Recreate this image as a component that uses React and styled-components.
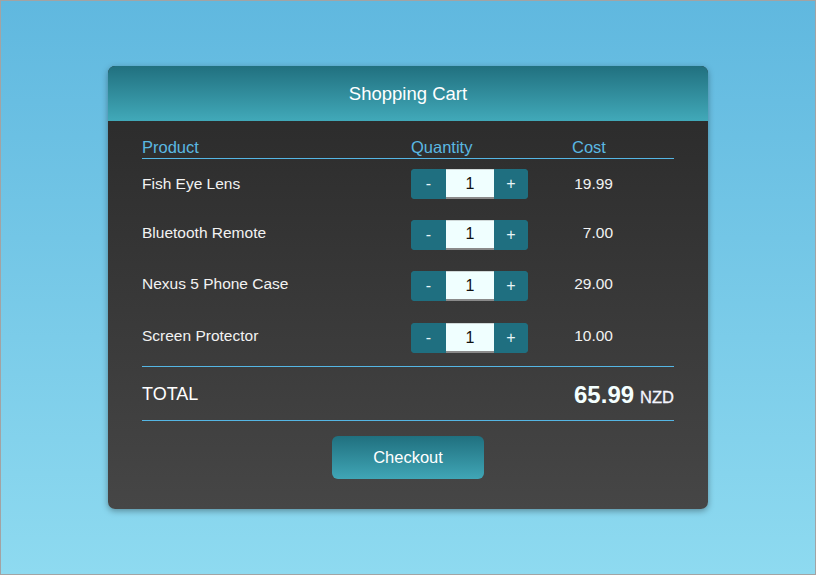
import styled, { createGlobalStyle } from "styled-components";

const GlobalStyle = createGlobalStyle`
  html, body {
    margin: 0;
    padding: 0;
  }
  body {
    font-family: "Liberation Sans", Arial, Helvetica, sans-serif;
  }
`;

const Page = styled.div`
  box-sizing: border-box;
  width: 816px;
  height: 575px;
  border: 1px solid #a3a3a3;
  background: linear-gradient(to bottom, #60b8df, #8edaf0);
  display: flex;
  align-items: center;
  justify-content: center;
`;

const Card = styled.div`
  width: 600px;
  height: 443px;
  border-radius: 7px;
  overflow: hidden;
  display: flex;
  flex-direction: column;
  background: linear-gradient(to bottom, #292929, #464646);
  box-shadow: 0 2px 6px rgba(0, 0, 0, 0.35);
`;

const Header = styled.div`
  height: 55px;
  flex-shrink: 0;
  display: flex;
  align-items: center;
  justify-content: center;
  color: #fff;
  font-size: 18.5px;
  background: linear-gradient(to bottom, #21707f, #41a9b9);
`;

const Body = styled.div`
  padding: 14px 34px 30px;
  display: flex;
  flex-direction: column;
`;

const Row = styled.div`
  display: grid;
  grid-template-columns: 269px 161px 1fr;
  align-items: center;
  height: ${({ h }) => h}px;
  border-bottom: ${({ line }) => (line ? "1px solid #55b6e4" : "none")};
`;

const HeadCell = styled.div`
  color: #5ab8e2;
  font-size: 16.5px;
  line-height: 20px;
`;

const Name = styled.div`
  color: #f2f2f2;
  font-size: 15.5px;
  padding-bottom: ${({ lift }) => lift}px;
`;

const Cost = styled.div`
  color: #f2f2f2;
  font-size: 15.5px;
  width: 41px;
  text-align: right;
  padding-bottom: ${({ lift }) => lift}px;
`;

const Spinner = styled.div`
  display: flex;
  width: 117px;
  height: 30px;
  border-radius: 4px;
  overflow: hidden;
  background: #1f6f80;
`;

const SpinButton = styled.button`
  width: ${({ w }) => w}px;
  border: none;
  padding: 0;
  background: #1f6f80;
  color: #e8f6f8;
  font-family: inherit;
  font-size: 16px;
  cursor: pointer;
`;

const QtyInput = styled.input`
  box-sizing: border-box;
  width: 48px;
  border: none;
  border-bottom: 2px solid #8a8a8a;
  border-top: 1px solid #cfd8d8;
  background: #f0ffff;
  color: #111;
  text-align: center;
  font-family: inherit;
  font-size: 16px;
  outline: none;
  padding: 0;
`;

const TotalRow = styled.div`
  margin-top: 2px;
  height: 53px;
  display: flex;
  align-items: center;
  justify-content: space-between;
  border-top: 1px solid #55b6e4;
  border-bottom: 1px solid #55b6e4;
  color: #fff;
`;

const TotalLabel = styled.div`
  font-size: 18px;
  padding-top: 2px;
`;

const TotalValue = styled.div`
  display: flex;
  align-items: baseline;
  gap: 6px;
  padding-top: 2px;
`;

const Amount = styled.span`
  font-size: 24px;
  font-weight: bold;
  color: #f4ffff;
`;

const Currency = styled.span`
  font-size: 16.5px;
  color: #f4f6ff;
  -webkit-text-stroke: 0.3px #f4f6ff;
`;

const Checkout = styled.button`
  align-self: center;
  margin-top: 15px;
  width: 152px;
  height: 43px;
  border: none;
  border-radius: 6px;
  background: linear-gradient(to bottom, #20707f, #40a6b6);
  color: #fff;
  font-family: inherit;
  font-size: 16.5px;
  cursor: pointer;
`;

const items = [
  { name: "Fish Eye Lens", cost: "19.99", h: 50, lift: 0 },
  { name: "Bluetooth Remote", cost: "7.00", h: 51, lift: 4 },
  { name: "Nexus 5 Phone Case", cost: "29.00", h: 52, lift: 4 },
  { name: "Screen Protector", cost: "10.00", h: 52, lift: 4 },
];

export default function App() {
  return (
    <Page>
      <GlobalStyle />
      <Card>
        <Header>Shopping Cart</Header>
        <Body>
          <Row h={23} line>
            <HeadCell>Product</HeadCell>
            <HeadCell>Quantity</HeadCell>
            <HeadCell>Cost</HeadCell>
          </Row>
          {items.map((item) => (
            <Row key={item.name} h={item.h}>
              <Name lift={item.lift}>{item.name}</Name>
              <Spinner>
                <SpinButton w={35}>-</SpinButton>
                <QtyInput defaultValue="1" />
                <SpinButton w={34}>+</SpinButton>
              </Spinner>
              <Cost lift={item.lift}>{item.cost}</Cost>
            </Row>
          ))}
          <TotalRow>
            <TotalLabel>TOTAL</TotalLabel>
            <TotalValue>
              <Amount>65.99</Amount>
              <Currency>NZD</Currency>
            </TotalValue>
          </TotalRow>
          <Checkout>Checkout</Checkout>
        </Body>
      </Card>
    </Page>
  );
}
